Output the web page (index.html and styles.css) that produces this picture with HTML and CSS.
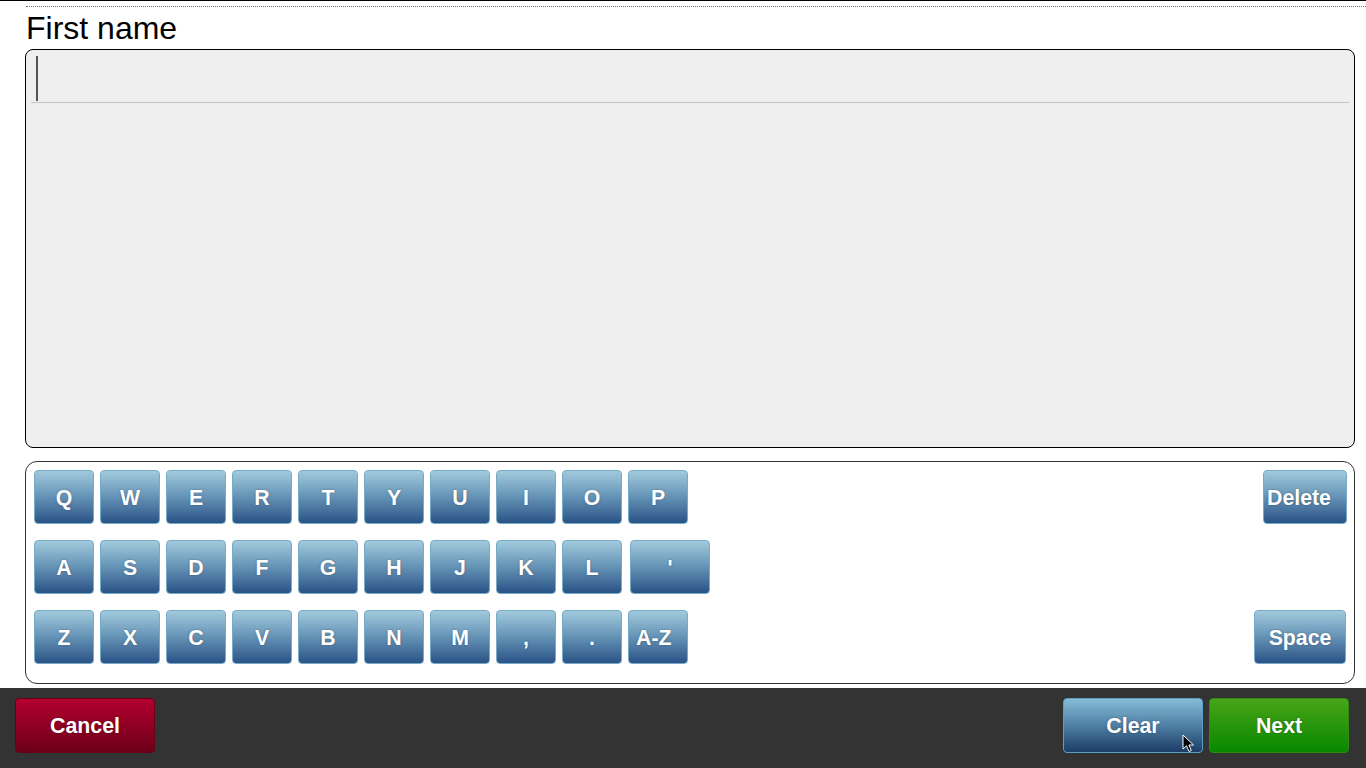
FILE: index.html
```html
<!DOCTYPE html>
<html>
<head>
<meta charset="utf-8">
<link rel="stylesheet" href="styles.css">
</head>
<body>
<div class="page">
  <div class="topline"></div>
  <div class="dots"></div>
  <main class="content">
    <div class="label">First name</div>
    <div class="textbox">
      <div class="inputline"><span class="caret"></span></div>
    </div>
    <div class="keyboard">
      <div class="krow">
        <div class="keys">
          <button class="key">Q</button><button class="key">W</button><button class="key">E</button><button class="key">R</button><button class="key">T</button><button class="key">Y</button><button class="key">U</button><button class="key">I</button><button class="key">O</button><button class="key">P</button>
        </div>
        <button class="key wide-del">Delete</button>
      </div>
      <div class="krow">
        <div class="keys">
          <button class="key">A</button><button class="key">S</button><button class="key">D</button><button class="key">F</button><button class="key">G</button><button class="key">H</button><button class="key">J</button><button class="key">K</button><button class="key">L</button><button class="key apos">'</button>
        </div>
      </div>
      <div class="krow">
        <div class="keys">
          <button class="key">Z</button><button class="key">X</button><button class="key">C</button><button class="key">V</button><button class="key">B</button><button class="key">N</button><button class="key">M</button><button class="key">,</button><button class="key">.</button><button class="key az">A-Z</button>
        </div>
        <button class="key wide-space">Space</button>
      </div>
    </div>
  </main>
  <footer class="footer">
    <button class="fbtn cancel">Cancel</button>
    <div class="fright">
      <button class="fbtn clear">Clear
        <svg class="pointer" width="13" height="20" viewBox="0 0 13 20"><path d="M1 1 L1 15 L4.5 11.8 L7 17.5 L9.3 16.5 L6.9 11 L11.5 11 Z" fill="#000" stroke="#fff" stroke-width="1"/></svg>
      </button>
      <button class="fbtn next">Next</button>
    </div>
  </footer>
</div>
</body>
</html>
```

FILE: styles.css
```css
* { box-sizing: border-box; }
html, body {
  margin: 0;
  padding: 0;
  background: #fff;
  font-family: "Liberation Sans", Arial, sans-serif;
}
.page {
  width: 1366px;
  height: 768px;
  display: flex;
  flex-direction: column;
  overflow: hidden;
}
.topline {
  height: 1px;
  background: #000;
}
.dots {
  margin: 5px 0 0 26px;
  border-top: 1px dotted #777;
  height: 0;
}
.content {
  padding: 0 11px 0 25px;
  display: flex;
  flex-direction: column;
}
.label {
  font-size: 32px;
  line-height: 36px;
  color: #000;
  margin: 3px 0 0 1px;
  height: 36px;
}
.textbox {
  margin-top: 3px;
  height: 399px;
  border: 1px solid #000;
  border-radius: 8px;
  background: #efefef;
  padding: 4px 5px 0 5px;
}
.inputline {
  height: 49px;
  border-bottom: 1px solid #c4c4c4;
  padding: 2px 0 0 5px;
}
.caret {
  display: block;
  width: 2px;
  height: 45px;
  background: #555;
}
.keyboard {
  margin-top: 13px;
  height: 223px;
  border: 1px solid #333;
  border-radius: 12px;
  background: #fff;
  padding: 8px 7px 0 8px;
  display: flex;
  flex-direction: column;
}
.krow {
  height: 70px;
  display: flex;
  justify-content: space-between;
  align-items: flex-start;
}
.keys {
  display: flex;
  gap: 6px;
}
.key {
  width: 60px;
  height: 54px;
  padding: 2px 0 0 0;
  border: 1px solid #75abc6;
  border-radius: 4px;
  background: linear-gradient(to bottom, #a2cadd 0%, #6a98b9 45%, #2a5387 100%);
  color: #fff;
  font-family: "Liberation Sans", Arial, sans-serif;
  font-weight: bold;
  font-size: 21.3px;
  text-shadow: 0 0 2px rgba(0, 0, 0, 0.35);
  display: flex;
  align-items: center;
  justify-content: center;
}
.apos {
  width: 80px;
  margin-left: 2px;
}
.az {
  justify-content: flex-start;
  padding-left: 7px;
}
.wide-del {
  width: 84px;
  justify-content: flex-start;
  padding-left: 3px;
}
.wide-space {
  width: 92px;
  margin-right: 1px;
}
.footer {
  margin-top: 4px;
  height: 80px;
  background: #333;
  padding: 10px 17px 0 15px;
  display: flex;
  justify-content: space-between;
  align-items: flex-start;
}
.fright {
  display: flex;
  gap: 6px;
}
.fbtn {
  position: relative;
  width: 140px;
  height: 55px;
  padding: 2px 0 0 0;
  border-radius: 4px;
  color: #fff;
  font-family: "Liberation Sans", Arial, sans-serif;
  font-weight: bold;
  font-size: 21.3px;
  text-shadow: 0 0 2px rgba(0, 0, 0, 0.35);
  display: flex;
  align-items: center;
  justify-content: center;
}
.cancel {
  border: 1px solid #6a0018;
  background: linear-gradient(to bottom, #b4002f 0%, #6c0019 100%);
}
.clear {
  border: 1px solid #5c9fc6;
  background: linear-gradient(to bottom, #86bcd8 0%, #4f7fa4 50%, #1b3d66 100%);
}
.next {
  border: 1px solid #2f8a10;
  background: linear-gradient(to bottom, #49a519 0%, #078800 100%);
}
.pointer {
  position: absolute;
  left: 118px;
  top: 35px;
}
```
